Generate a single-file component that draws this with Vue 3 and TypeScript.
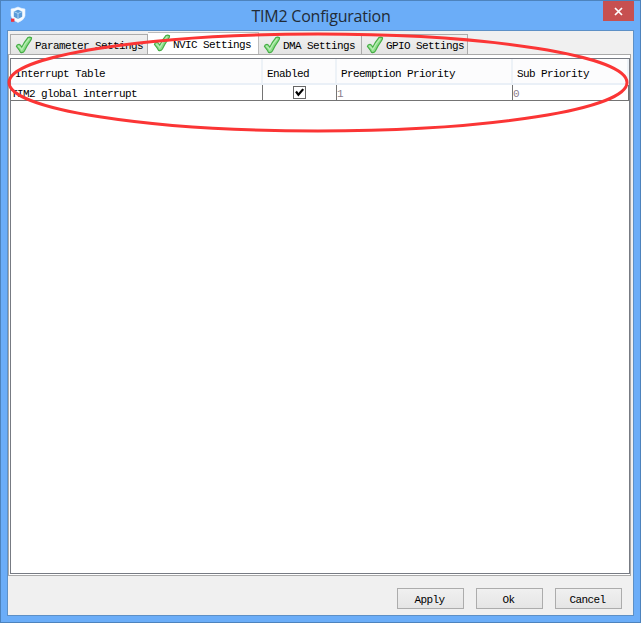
<script setup lang="ts">
import { ref } from 'vue'

interface Tab { name: string; cls: string }
interface Row { name: string; enabled: boolean; preemption: number; sub: number }

const tabs: Tab[] = [
  { name: 'Parameter Settings', cls: 'parameter' },
  { name: 'NVIC Settings', cls: 'nvic' },
  { name: 'DMA Settings', cls: 'dma' },
  { name: 'GPIO Settings', cls: 'gpio' },
]
const active = ref('NVIC Settings')
const columns: string[] = ['Interrupt Table', 'Enabled', 'Preemption Priority', 'Sub Priority']
const rows = ref<Row[]>([{ name: 'TIM2 global interrupt', enabled: true, preemption: 1, sub: 0 }])
const actions: string[] = ['Apply', 'Ok', 'Cancel']
</script>

<template>
  <div class="window">
    <header class="titlebar">
      <svg class="logo" width="16" height="18" viewBox="0 0 16 18">
        <path d="M8 1 Q11 2.5 15 3 V10 Q14 14 8 16.5 Q2 14 1 10 V3 Q5 2.5 8 1Z" fill="#f7fbff" stroke="#dcecff" stroke-width=".6" />
        <path d="M8 3.8 L12.2 5.4 V10.8 L8 13 L3.8 10.8 V5.4Z" fill="#5b9bd8" />
        <path d="M4 5.6 L8 7.5 L12 5.6 M8 7.5V13" fill="none" stroke="#b7dbf8" stroke-width=".9" />
        <rect x="1" y="12.6" width="3.4" height="3.2" fill="#f3323c" />
      </svg>
      <h1>TIM2 Configuration</h1>
      <button class="close" aria-label="Close">
        <svg width="9" height="9" viewBox="0 0 9 9"><path d="M1 1L8 8M8 1L1 8" stroke="#fff" stroke-width="1.7" /></svg>
      </button>
    </header>

    <main class="client">
      <nav class="tabs">
        <button v-for="tab in tabs" :key="tab.name" class="tab" :class="[tab.cls, { active: active === tab.name }]" @click="active = tab.name">
          <svg class="check" width="18" height="18" viewBox="0 0 18 18">
            <path d="M1.4 10.4 Q1.8 8.6 4 8.3 Q5.6 8.7 6.8 11.2 Q9.2 6 13 1.4 Q14.8 .6 16.6 1.8 Q16.6 3.2 15.4 4.8 Q11.6 10 9.4 15 Q8 17.2 5.6 16.4 Q3.8 13.2 1.4 10.4Z" fill="#8bdc88" stroke="#45ad45" stroke-width="1.1" stroke-linejoin="round" />
            <path d="M3.2 10.1 Q5.2 11 6.8 13.8 Q9.8 7.4 14.2 2.6" fill="none" stroke="#b8efb4" stroke-width="1.3" />
          </svg>
          <span>{{ tab.name }}</span>
        </button>
      </nav>

      <section class="pane">
        <div class="table">
          <div class="grid head">
            <div v-for="column in columns" :key="column">{{ column }}</div>
          </div>
          <div v-for="row in rows" :key="row.name" class="grid row">
            <div>{{ row.name }}</div>
            <div class="enabled" @click="row.enabled = !row.enabled">
              <svg width="13" height="13" viewBox="0 0 13 13">
                <rect x=".5" y=".5" width="12" height="12" fill="#fff" stroke="#666" />
                <path v-if="row.enabled" d="M3 5.5L5.4 8.8L10.2 3.1" fill="none" stroke="#000" stroke-width="2.2" />
              </svg>
            </div>
            <div class="muted">{{ row.preemption }}</div>
            <div class="muted">{{ row.sub }}</div>
          </div>
        </div>
      </section>

      <footer class="actions">
        <button v-for="action in actions" :key="action">{{ action }}</button>
      </footer>
    </main>

    <svg class="annotation" width="641" height="623" viewBox="0 0 641 623">
      <ellipse cx="318" cy="82.5" rx="309" ry="48.5" fill="none" stroke="#fb3535" stroke-width="3" />
    </svg>
  </div>
</template>

<style>
body { margin: 0; overflow: hidden; }
</style>

<style scoped>
* { box-sizing: border-box; }
.window {
  position: relative;
  width: 641px;
  height: 623px;
  padding: 0 6px 6px;
  display: flex;
  flex-direction: column;
  background: #6badf8;
  border: 1px solid #4d83bd;
  font: 11px/14px "Liberation Mono", monospace;
  letter-spacing: -0.6px;
  color: #000;
}
button { font: inherit; letter-spacing: inherit; color: inherit; margin: 0; padding: 0; }
.titlebar { flex: 0 0 29px; display: flex; align-items: flex-start; }
.logo { margin: 5px 0 0 3px; flex: none; }
h1 {
  flex: 1;
  margin: 4px 0 0;
  padding-left: 13px;
  text-align: center;
  font: 400 16px/22px "Open Sans", "Noto Sans", sans-serif;
  letter-spacing: -0.22px;
  color: #222b36;
}
.close {
  width: 31px;
  height: 20px;
  border: 0;
  background: #c75050;
  display: flex;
  align-items: center;
  justify-content: center;
}
.client {
  flex: 1;
  display: flex;
  flex-direction: column;
  border: 1px solid #5d90c6;
  background: #f0f0f0;
}
.tabs { flex: 0 0 23px; padding-left: 2px; display: flex; align-items: flex-end; }
.tab {
  height: 20px;
  display: flex;
  align-items: center;
  border: 1px solid #acacac;
  border-bottom: 0;
  border-left: 0;
  background: linear-gradient(#f0f0f0, #e4e4e4);
  padding-left: 5px;
  white-space: pre;
}
.tab span { margin-left: 2px; padding-top: 3px; }
.check { flex: none; margin-top: 1px; }
.parameter { width: 138px; border-left: 1px solid #acacac; padding-left: 4px; }
.nvic { width: 111px; }
.dma { width: 103px; padding-left: 4px; }
.gpio { width: 106px; padding-left: 4px; }
.active { height: 23px; margin-bottom: -1px; background: #fff; border-color: #bcbcbc; }
.tab.active span { padding-top: 1px; }
.active .check { margin-top: -2px; }
.pane {
  flex: 0 0 522px;
  width: 623px;
  padding: 3px 0 1px 1px;
  border: 1px solid #a9a9a9;
  background: #fff;
}
.table { height: 516px; border: 1px solid #777b83; }
.grid { display: grid; grid-template-columns: 252px 74px 176px 1fr; }
.head { height: 26px; background: #fcfcfd; border-bottom: 2px solid #eaf0f7; }
.head div { padding: 8px 0 0 4px; border-right: 2px solid #edf2f7; }
.row { height: 16px; border-bottom: 1px solid #747474; }
.row div { padding: 2px 0 0; border-right: 1px solid #747474; }
.row .enabled { padding: 1px 0 0; text-align: center; line-height: 0; }
.row .muted { color: #8b7d8b; }
.actions { flex: 1; display: flex; gap: 12px; justify-content: flex-end; padding: 12px 11px 0 0; }
.actions button {
  width: 67px;
  height: 21px;
  padding: 2px 2px 0 0;
  border: 1px solid #acacac;
  background: linear-gradient(#f0f0f0, #e5e5e5);
}
.annotation { position: absolute; left: -1px; top: -1px; pointer-events: none; }
</style>
